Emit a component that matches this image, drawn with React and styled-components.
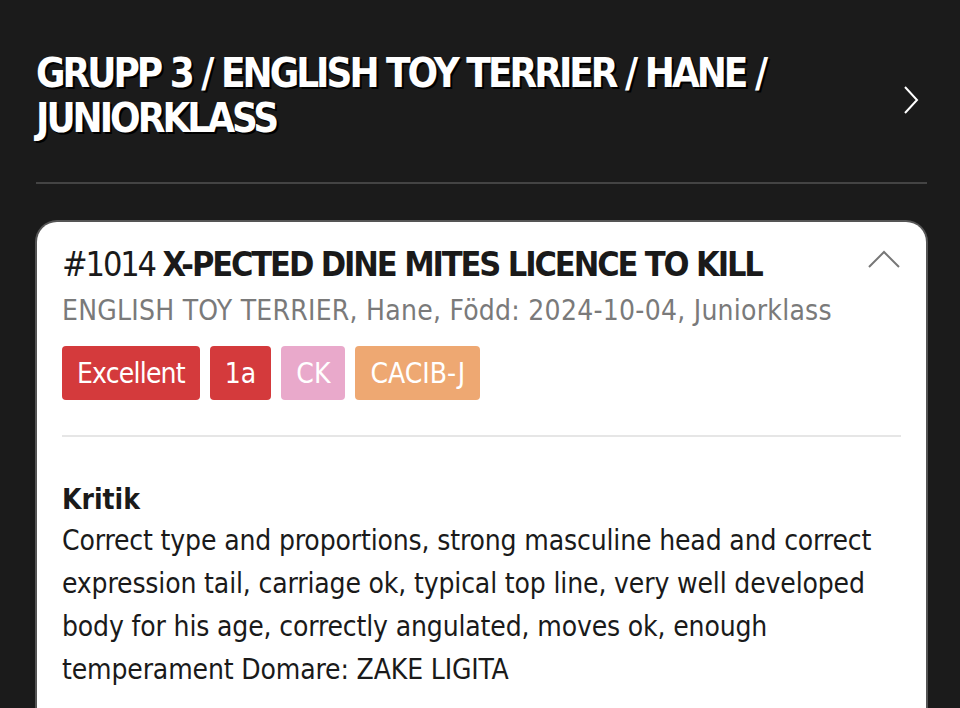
import React from "react";
import styled, { createGlobalStyle } from "styled-components";

const Global = createGlobalStyle`
  html, body { margin: 0; padding: 0; background: #1b1b1b; }
  body { font-family: "DejaVu Sans Condensed", "Liberation Sans", sans-serif; }
`;

const Page = styled.div`
  width: 960px;
  height: 708px;
  overflow: hidden;
  background: #1b1b1b;
  box-sizing: border-box;
  padding: 51px 33px 0 36px;
`;

const Header = styled.div`
  display: flex;
  align-items: center;
  justify-content: space-between;
  padding-bottom: 41px;
  border-bottom: 2px solid #444;
`;

const Title = styled.h1`
  margin: 0;
  color: #fff;
  font-size: 40px;
  line-height: 45px;
  font-weight: 700;
  letter-spacing: -3px;
  text-shadow: 2px 2px 0 #000;
  max-width: 780px;
`;

const Chevron = styled.svg`
  width: 20px;
  height: 32px;
  margin-right: 6px;
  margin-top: 8px;
`;

const Card = styled.div`
  margin-top: 38px;
  margin-left: 1px;
  margin-right: 1px;
  background: #fff;
  border-radius: 20px 20px 0 0;
  padding: 22px 25px 40px 25px;
  box-shadow: 0 0 0 2px #555;
  height: 600px;
`;

const DogHead = styled.div`
  display: flex;
  justify-content: space-between;
  align-items: flex-start;
`;

const DogName = styled.div`
  color: #1a1a1a;
  font-size: 34px;
  line-height: 40px;
  letter-spacing: -2.1px;
`;

const Num = styled.span`
  font-weight: 400;
`;

const Name = styled.span`
  font-weight: 700;
`;

const Collapse = styled.svg`
  width: 34px;
  height: 20px;
  margin-top: 5px;
`;

const Meta = styled.div`
  color: #7a7a7a;
  font-size: 28px;
  line-height: 32px;
  margin-top: 11px;
  letter-spacing: 0.25px;
`;

const Badges = styled.div`
  display: flex;
  gap: 10px;
  margin-top: 19px;
  padding-bottom: 35px;
  border-bottom: 2px solid #e6e6e6;
`;

const Badge = styled.span`
  display: inline-flex;
  align-items: center;
  box-sizing: border-box;
  height: 54px;
  padding: 0 15px;
  border-radius: 4px;
  background: ${(p) => p.$bg};
  color: #fff;
  font-size: 28px;
  letter-spacing: ${(p) => (p.$tight ? "-0.8px" : "0")};
`;

const Section = styled.div`
  margin-top: 46px;
  color: #1a1a1a;
`;

const SectionTitle = styled.div`
  font-weight: 700;
  font-size: 28px;
  line-height: 34px;
`;

const Body = styled.p`
  margin: 2px 0 0;
  font-size: 28px;
  line-height: 43px;
  letter-spacing: -0.15px;
  max-width: 830px;
`;

export default function App() {
  return (
    <>
      <Global />
      <Page>
        <Header>
          <Title>GRUPP 3 / ENGLISH TOY TERRIER / HANE / JUNIORKLASS</Title>
          <Chevron viewBox="0 0 20 32">
            <path d="M4 3 L16 16 L4 29" fill="none" stroke="#fff" strokeWidth="2" />
          </Chevron>
        </Header>
        <Card>
          <DogHead>
            <DogName>
              <Num>#1014 </Num>
              <Name>X-PECTED DINE MITES LICENCE TO KILL</Name>
            </DogName>
            <Collapse viewBox="0 0 34 20">
              <path d="M2 18 L17 3 L32 18" fill="none" stroke="#777" strokeWidth="2" />
            </Collapse>
          </DogHead>
          <Meta>ENGLISH TOY TERRIER, Hane, Född: 2024-10-04, Juniorklass</Meta>
          <Badges>
            <Badge $bg="#d43a3c" $tight>Excellent</Badge>
            <Badge $bg="#d43a3c">1a</Badge>
            <Badge $bg="#e9a9cb">CK</Badge>
            <Badge $bg="#eea872">CACIB-J</Badge>
          </Badges>
          <Section>
            <SectionTitle>Kritik</SectionTitle>
            <Body>
              Correct type and proportions, strong masculine head and correct expression tail,
              carriage ok, typical top line, very well developed body for his age, correctly
              angulated, moves ok, enough temperament Domare: ZAKE LIGITA
            </Body>
          </Section>
        </Card>
      </Page>
    </>
  );
}
